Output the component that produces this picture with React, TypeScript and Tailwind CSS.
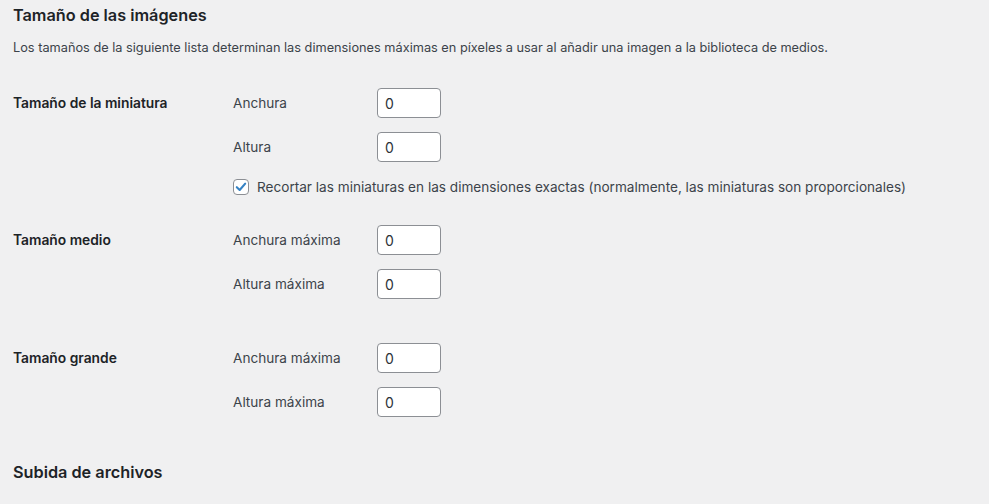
import React from 'react'

const font = { fontFamily: 'Inter, "Noto Sans", sans-serif' }

function NumberField({ value }: { value: string }) {
  return (
    <input
      type="text"
      defaultValue={value}
      className="w-[64px] h-[30px] bg-white border border-[#8c8f94] rounded-[4px] px-[7px] text-[14px] text-[#2c3338] outline-none"
    />
  )
}

function SizeRow({ label, value }: { label: string; value: string }) {
  return (
    <div className="flex items-center h-[30px]">
      <span className="w-[144px] text-[13.6px] text-[#3c434a]">{label}</span>
      <NumberField value={value} />
    </div>
  )
}

function CheckIcon() {
  return (
    <svg viewBox="0 0 16 16" className="w-[16px] h-[16px]">
      <path d="M3.2 8.2 L6.5 11.4 L12.8 4.2" fill="none" stroke="#3582c4" strokeWidth="2.4" strokeLinecap="round" strokeLinejoin="round" />
    </svg>
  )
}

export default function App() {
  return (
    <div className="min-h-screen w-full bg-[#f0f0f1] text-[#3c434a]" style={font}>
      <div className="pl-[13px] pt-[4px]">
        <h2 className="text-[16.25px] leading-[23px] font-semibold text-[#1d2327]">Tamaño de las imágenes</h2>
        <p className="mt-[11px] text-[12.75px] leading-[20px] text-[#3c434a]">
          Los tamaños de la siguiente lista determinan las dimensiones máximas en píxeles a usar al añadir una imagen a la biblioteca de medios.
        </p>

        {/* miniatura */}
        <div className="flex mt-[30px]">
          <div className="w-[220px] text-[13.8px] leading-[30px] font-semibold text-[#1d2327]">Tamaño de la miniatura</div>
          <div className="flex flex-col">
            <SizeRow label="Anchura" value="0" />
            <div className="mt-[14px]"><SizeRow label="Altura" value="0" /></div>
            <label className="mt-[17px] flex items-center h-[16px] text-[13.6px] text-[#3c434a]">
              <span className="w-[16px] h-[16px] bg-white border border-[#8c8f94] rounded-[4px] flex items-center justify-center mr-[8px]">
                <CheckIcon />
              </span>
              Recortar las miniaturas en las dimensiones exactas (normalmente, las miniaturas son proporcionales)
            </label>
          </div>
        </div>

        {/* medio */}
        <div className="flex mt-[30px]">
          <div className="w-[220px] text-[13.8px] leading-[30px] font-semibold text-[#1d2327]">Tamaño medio</div>
          <div className="flex flex-col">
            <SizeRow label="Anchura máxima" value="0" />
            <div className="mt-[14px]"><SizeRow label="Altura máxima" value="0" /></div>
          </div>
        </div>

        {/* grande */}
        <div className="flex mt-[44px]">
          <div className="w-[220px] text-[13.8px] leading-[30px] font-semibold text-[#1d2327]">Tamaño grande</div>
          <div className="flex flex-col">
            <SizeRow label="Anchura máxima" value="0" />
            <div className="mt-[14px]"><SizeRow label="Altura máxima" value="0" /></div>
          </div>
        </div>

        <h2 className="mt-[44px] text-[16.25px] leading-[23px] font-semibold text-[#1d2327]">Subida de archivos</h2>
      </div>
    </div>
  )
}
